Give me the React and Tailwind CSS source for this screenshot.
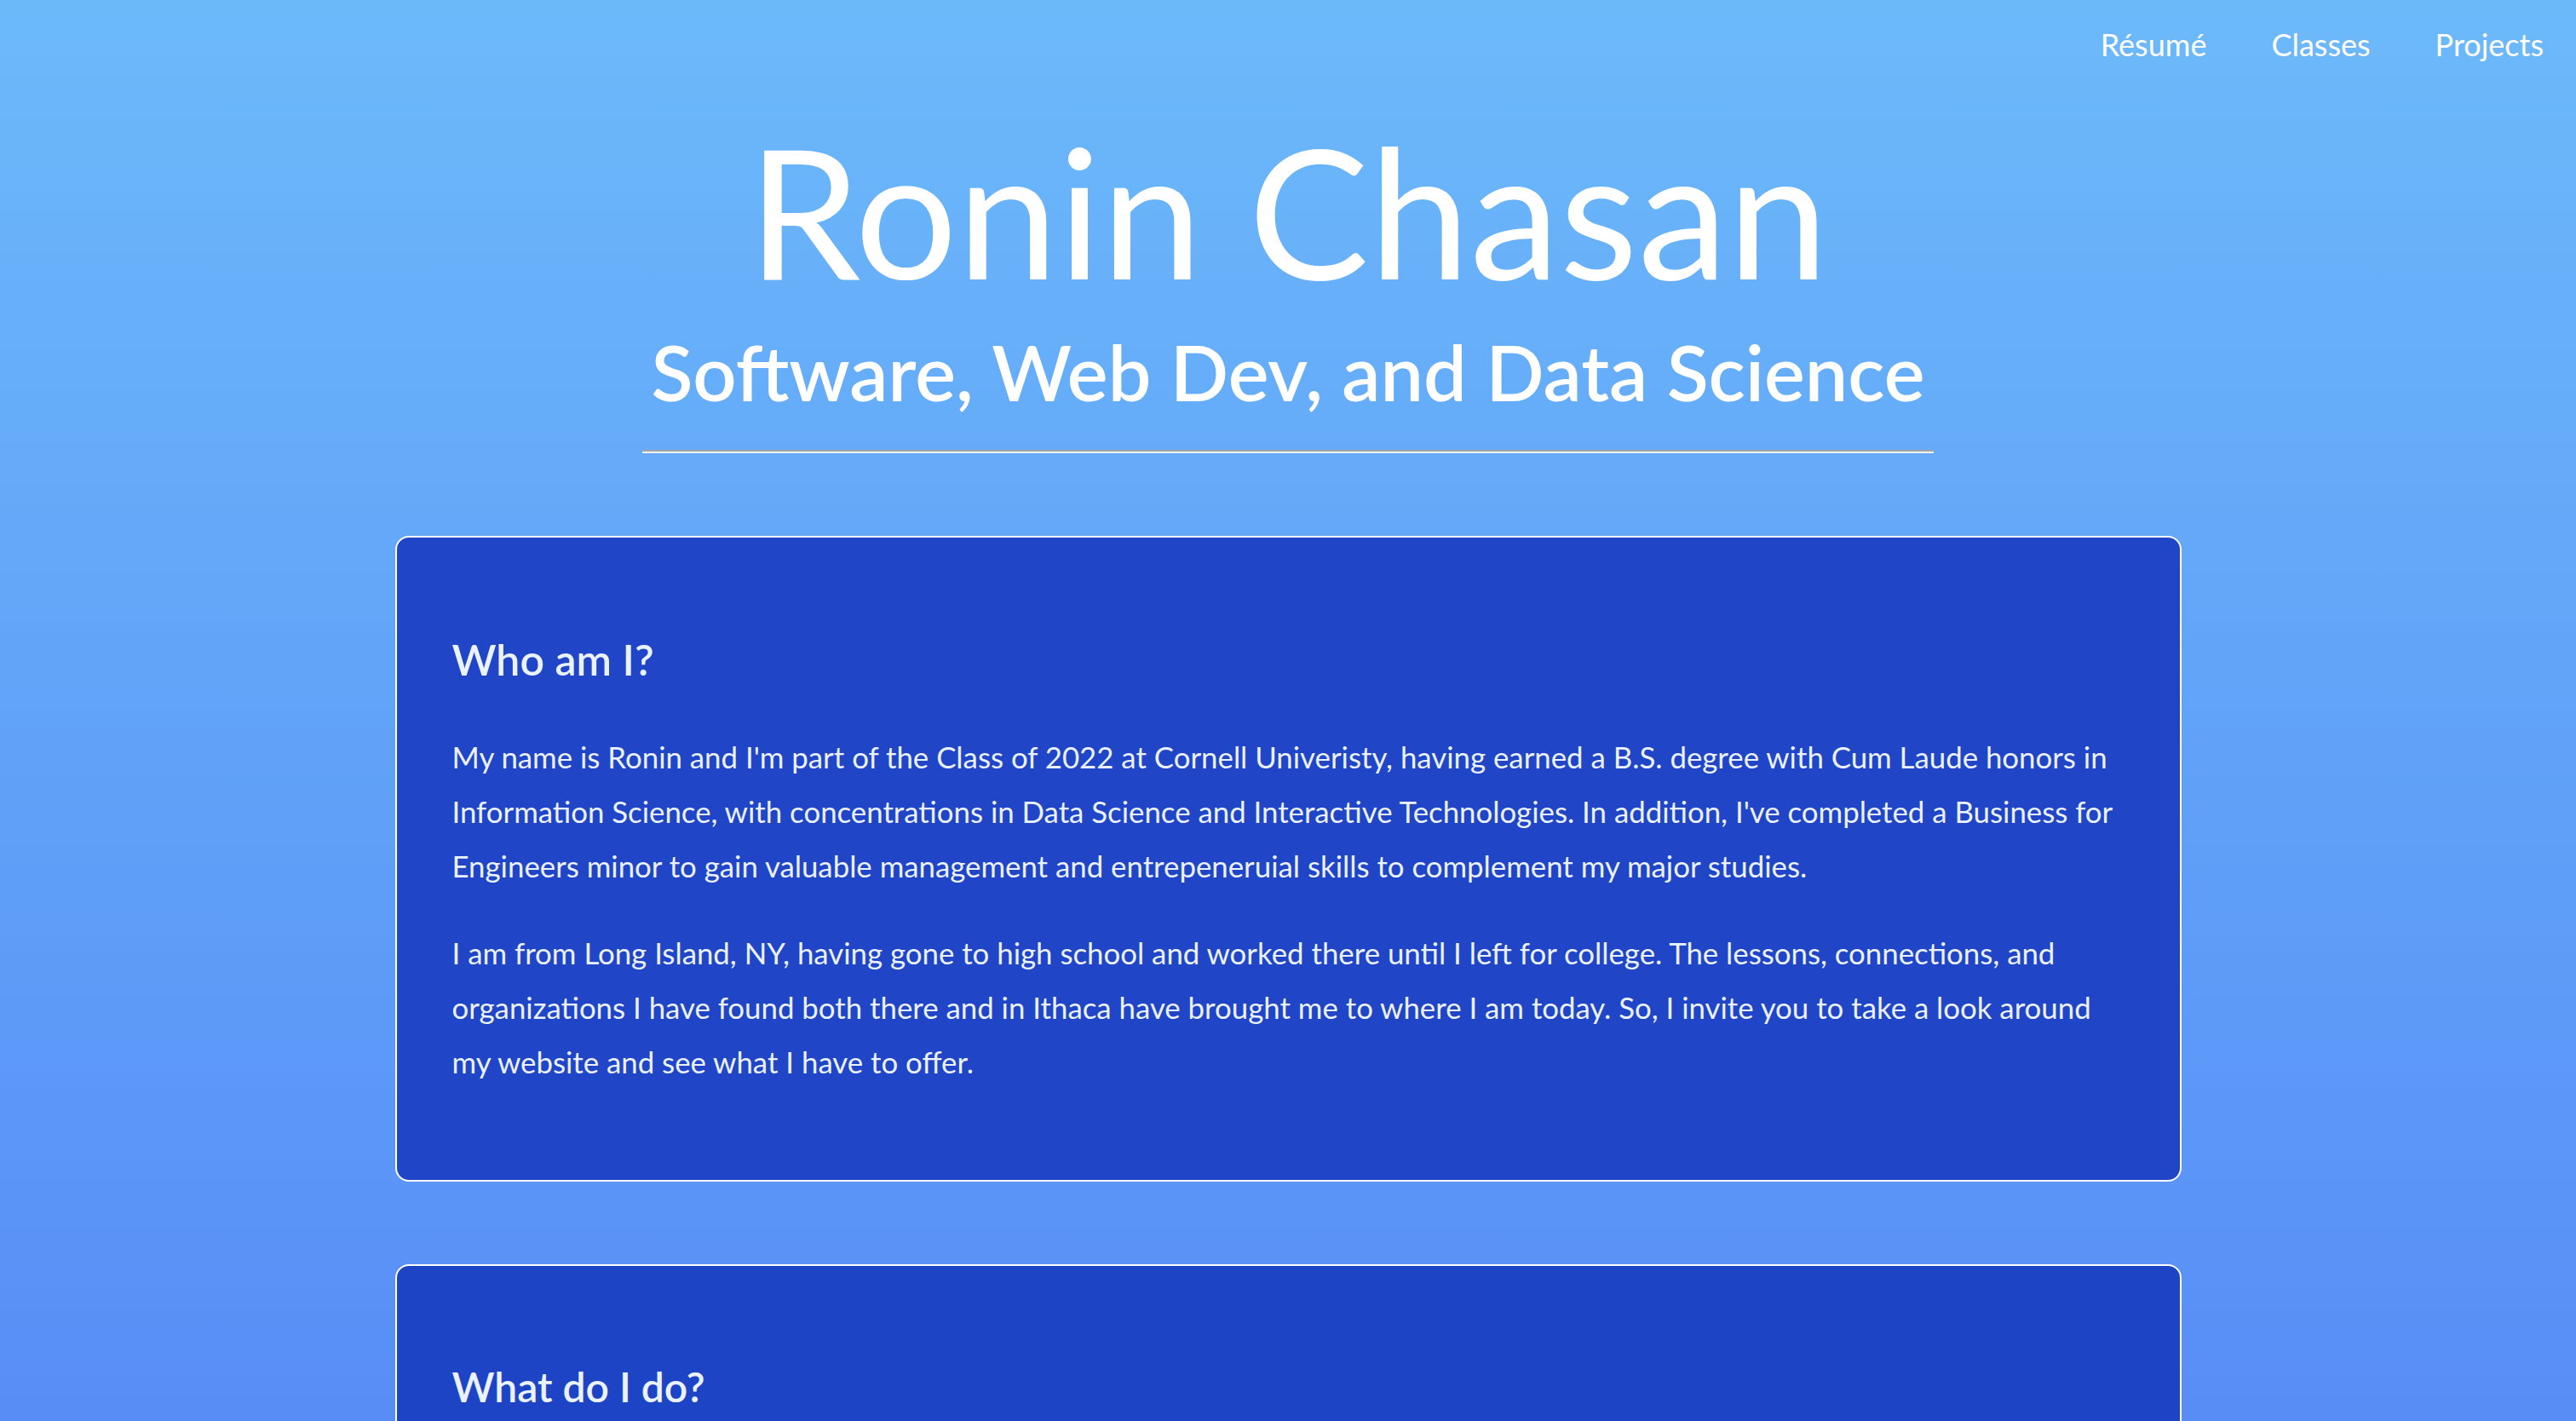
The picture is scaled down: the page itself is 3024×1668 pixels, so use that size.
export default function App() {
  const font = { fontFamily: 'Lato, "Noto Sans", sans-serif' };
  return (
    <div
      className="h-[1668px] w-full overflow-hidden bg-gradient-to-b from-[#6cb9fa] to-[#588df6] text-white"
      style={font}
    >
      <nav className="flex justify-end gap-[76px] pt-[34px] pr-[38px] text-[36px] leading-none">
        <a className="text-white">Résumé</a>
        <a className="text-white">Classes</a>
        <a className="text-white">Projects</a>
      </nav>

      <header className="flex flex-col items-center">
        <h1 className="mt-[70px] text-[212px] leading-none font-normal">Ronin Chasan</h1>
        <h2 className="mt-[39px] text-[90px] leading-none font-semibold">
          Software, Web Dev, and Data Science
        </h2>
        <div className="mt-[47px] w-[1516px] border-t-2 border-b-2 border-t-[#a3a3a3] border-b-[#eef2f7]" />
      </header>

      <main className="mx-auto mt-[97px] flex w-[2097px] flex-col gap-[97px]">
        <section className="rounded-[16px] border-2 border-white bg-[#2045c6] px-[65px] pt-[118px] pb-[106px] text-[#eaf1ff]">
          <h3 className="text-[50px] leading-none font-semibold">Who am I?</h3>
          <p className="mt-[58px] text-[34.8px] leading-[64px]">
            My name is Ronin and I'm part of the Class of 2022 at Cornell Univeristy, having earned a B.S. degree with Cum Laude honors in Information Science, with concentrations in Data Science and Interactive Technologies. In addition, I've completed a Business for Engineers minor to gain valuable management and entrepeneruial skills to complement my major studies.
          </p>
          <p className="mt-[38px] text-[34.8px] leading-[64px]">
            I am from Long Island, NY, having gone to high school and worked there until I left for college. The lessons, connections, and organizations I have found both there and in Ithaca have brought me to where I am today. So, I invite you to take a look around my website and see what I have to offer.
          </p>
        </section>

        <section className="rounded-[16px] border-2 border-white bg-[#1e44c6] px-[65px] pt-[118px] pb-[106px] text-[#eaf1ff]">
          <h3 className="text-[48px] leading-none font-semibold">What do I do?</h3>
          <p className="mt-[58px] text-[34.8px] leading-[64px]">
            I build software, websites, and data-driven projects.
          </p>
        </section>
      </main>
    </div>
  );
}
